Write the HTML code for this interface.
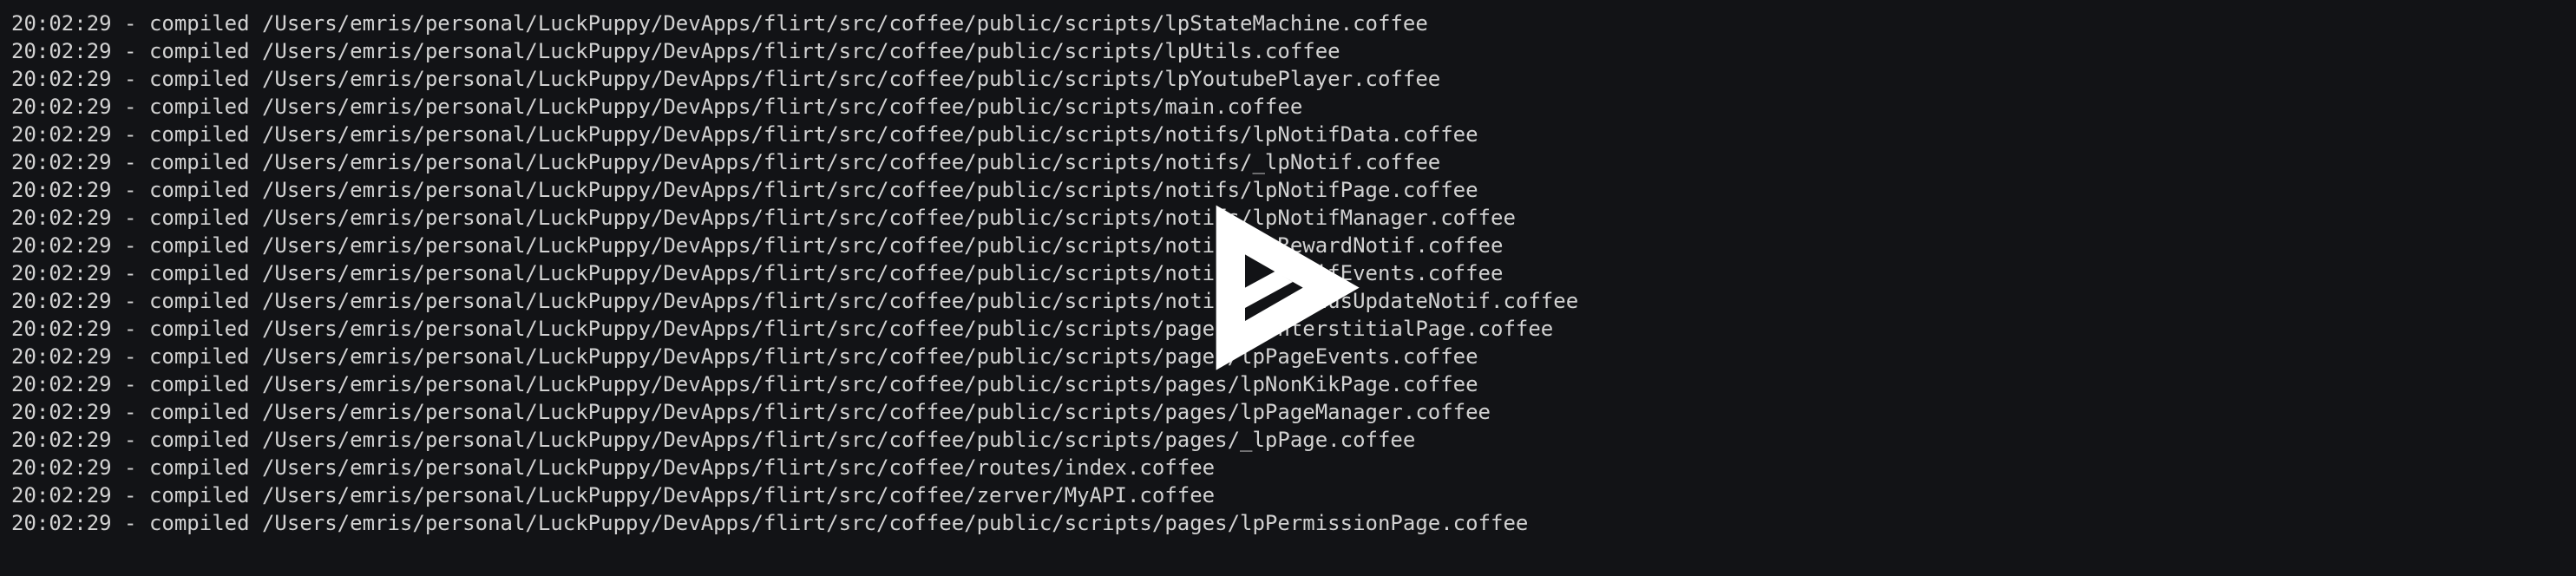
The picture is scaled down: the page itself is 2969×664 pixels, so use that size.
<!DOCTYPE html>
<html><head><meta charset="utf-8"><style>
html,body{margin:0;padding:0;background:#121316;width:2969px;height:664px;overflow:hidden}
pre{margin:0;position:absolute;left:13px;top:11px;font-family:"DejaVu Sans Mono","Liberation Mono",monospace;font-size:24px;line-height:32px;color:#d2d2d2}
svg{position:absolute;left:1380px;top:220px}
</style></head><body>
<pre>20:02:29 - compiled /Users/emris/personal/LuckPuppy/DevApps/flirt/src/coffee/public/scripts/lpStateMachine.coffee
20:02:29 - compiled /Users/emris/personal/LuckPuppy/DevApps/flirt/src/coffee/public/scripts/lpUtils.coffee
20:02:29 - compiled /Users/emris/personal/LuckPuppy/DevApps/flirt/src/coffee/public/scripts/lpYoutubePlayer.coffee
20:02:29 - compiled /Users/emris/personal/LuckPuppy/DevApps/flirt/src/coffee/public/scripts/main.coffee
20:02:29 - compiled /Users/emris/personal/LuckPuppy/DevApps/flirt/src/coffee/public/scripts/notifs/lpNotifData.coffee
20:02:29 - compiled /Users/emris/personal/LuckPuppy/DevApps/flirt/src/coffee/public/scripts/notifs/_lpNotif.coffee
20:02:29 - compiled /Users/emris/personal/LuckPuppy/DevApps/flirt/src/coffee/public/scripts/notifs/lpNotifPage.coffee
20:02:29 - compiled /Users/emris/personal/LuckPuppy/DevApps/flirt/src/coffee/public/scripts/notifs/lpNotifManager.coffee
20:02:29 - compiled /Users/emris/personal/LuckPuppy/DevApps/flirt/src/coffee/public/scripts/notifs/lpRewardNotif.coffee
20:02:29 - compiled /Users/emris/personal/LuckPuppy/DevApps/flirt/src/coffee/public/scripts/notifs/lpNotifEvents.coffee
20:02:29 - compiled /Users/emris/personal/LuckPuppy/DevApps/flirt/src/coffee/public/scripts/notifs/lpStatusUpdateNotif.coffee
20:02:29 - compiled /Users/emris/personal/LuckPuppy/DevApps/flirt/src/coffee/public/scripts/pages/lpInterstitialPage.coffee
20:02:29 - compiled /Users/emris/personal/LuckPuppy/DevApps/flirt/src/coffee/public/scripts/pages/lpPageEvents.coffee
20:02:29 - compiled /Users/emris/personal/LuckPuppy/DevApps/flirt/src/coffee/public/scripts/pages/lpNonKikPage.coffee
20:02:29 - compiled /Users/emris/personal/LuckPuppy/DevApps/flirt/src/coffee/public/scripts/pages/lpPageManager.coffee
20:02:29 - compiled /Users/emris/personal/LuckPuppy/DevApps/flirt/src/coffee/public/scripts/pages/_lpPage.coffee
20:02:29 - compiled /Users/emris/personal/LuckPuppy/DevApps/flirt/src/coffee/routes/index.coffee
20:02:29 - compiled /Users/emris/personal/LuckPuppy/DevApps/flirt/src/coffee/zerver/MyAPI.coffee
20:02:29 - compiled /Users/emris/personal/LuckPuppy/DevApps/flirt/src/coffee/public/scripts/pages/lpPermissionPage.coffee</pre>
<svg width="240" height="220" viewBox="0 0 720 660">
<polygon points="65,50 65,620 560,335" fill="#fff"/>
<polygon points="165,220 165,450 365,335" fill="#121316"/>
<polygon points="165,335 270,278 330,315 165,405" fill="#fff"/>
</svg>
</body></html>
